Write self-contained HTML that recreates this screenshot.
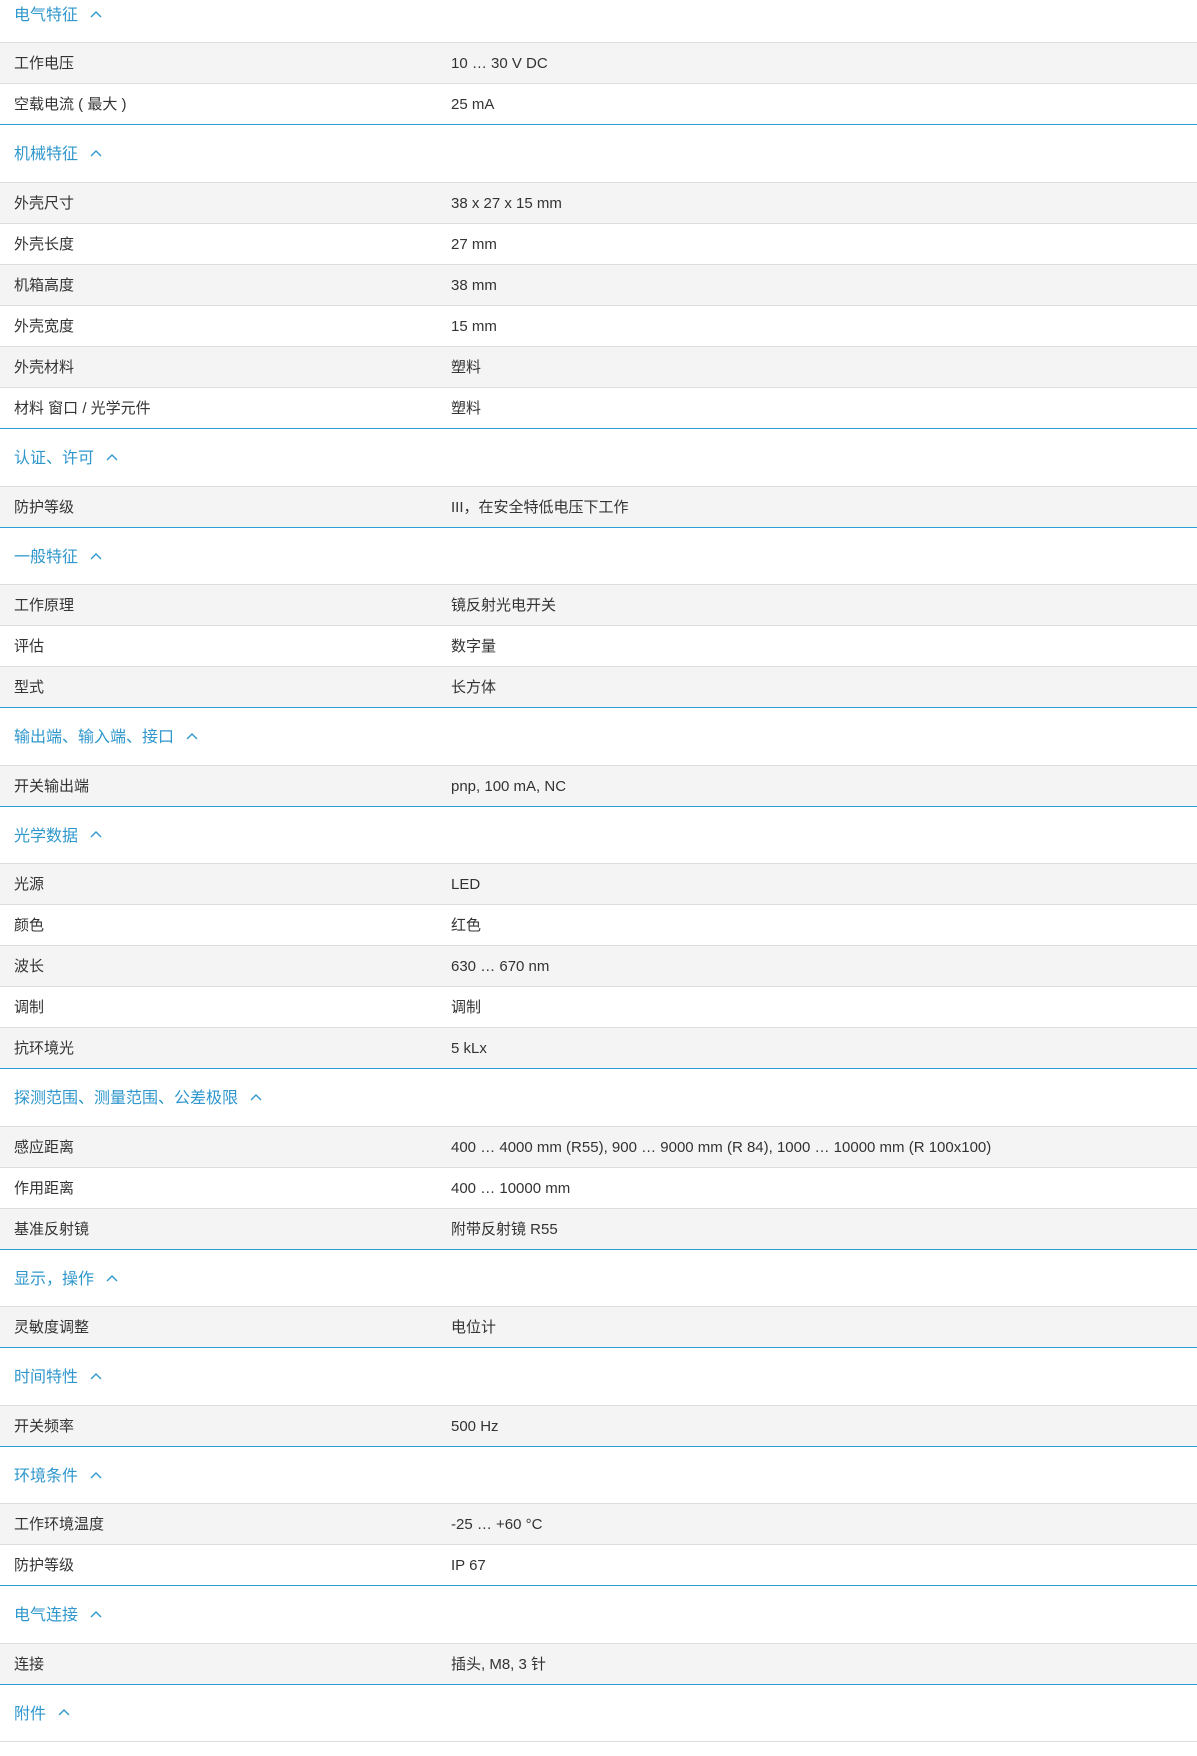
<!DOCTYPE html>
<html><head><meta charset="utf-8"><style>
body{margin:0;background:#fff;font-family:"Liberation Sans","Noto Sans CJK SC",sans-serif;overflow:hidden}
.wrap{position:relative;top:-14px;width:1197px}
.h{height:56.3px;border-bottom:1px solid #ddd;color:#2f97cc;font-size:16px;line-height:59px;padding-left:14px;box-sizing:content-box}
.h svg{margin-left:12px;vertical-align:middle;position:relative;top:-2px}
.r{height:40.1px;border-bottom:1px solid #ddd;font-size:15px;color:#333;line-height:41px;position:relative;background:#fff}
.r:nth-child(even){background:#f4f4f4}
.r span{position:absolute;left:14px}
.r b{font-weight:normal;position:absolute;left:451px}
.s{border-bottom:1px solid #2a9fd6}
.s .r:last-child{border-bottom:none}
</style></head><body><div class="wrap">
<div class="h">电气特征<svg width="12" height="8" viewBox="0 0 12 8"><path d="M1 7L6 2L11 7" fill="none" stroke="#2f97cc" stroke-width="1.4"/></svg></div>
<div class="s"><div></div><div class="r"><span>工作电压</span><b>10 … 30 V DC</b></div><div class="r"><span>空载电流 ( 最大 )</span><b>25 mA</b></div></div>
<div class="h">机械特征<svg width="12" height="8" viewBox="0 0 12 8"><path d="M1 7L6 2L11 7" fill="none" stroke="#2f97cc" stroke-width="1.4"/></svg></div>
<div class="s"><div></div><div class="r"><span>外壳尺寸</span><b>38 x 27 x 15 mm</b></div><div class="r"><span>外壳长度</span><b>27 mm</b></div><div class="r"><span>机箱高度</span><b>38 mm</b></div><div class="r"><span>外壳宽度</span><b>15 mm</b></div><div class="r"><span>外壳材料</span><b>塑料</b></div><div class="r"><span>材料 窗口 / 光学元件</span><b>塑料</b></div></div>
<div class="h">认证、许可<svg width="12" height="8" viewBox="0 0 12 8"><path d="M1 7L6 2L11 7" fill="none" stroke="#2f97cc" stroke-width="1.4"/></svg></div>
<div class="s"><div></div><div class="r"><span>防护等级</span><b>III，在安全特低电压下工作</b></div></div>
<div class="h">一般特征<svg width="12" height="8" viewBox="0 0 12 8"><path d="M1 7L6 2L11 7" fill="none" stroke="#2f97cc" stroke-width="1.4"/></svg></div>
<div class="s"><div></div><div class="r"><span>工作原理</span><b>镜反射光电开关</b></div><div class="r"><span>评估</span><b>数字量</b></div><div class="r"><span>型式</span><b>长方体</b></div></div>
<div class="h">输出端、输入端、接口<svg width="12" height="8" viewBox="0 0 12 8"><path d="M1 7L6 2L11 7" fill="none" stroke="#2f97cc" stroke-width="1.4"/></svg></div>
<div class="s"><div></div><div class="r"><span>开关输出端</span><b>pnp, 100 mA, NC</b></div></div>
<div class="h">光学数据<svg width="12" height="8" viewBox="0 0 12 8"><path d="M1 7L6 2L11 7" fill="none" stroke="#2f97cc" stroke-width="1.4"/></svg></div>
<div class="s"><div></div><div class="r"><span>光源</span><b>LED</b></div><div class="r"><span>颜色</span><b>红色</b></div><div class="r"><span>波长</span><b>630 … 670 nm</b></div><div class="r"><span>调制</span><b>调制</b></div><div class="r"><span>抗环境光</span><b>5 kLx</b></div></div>
<div class="h">探测范围、测量范围、公差极限<svg width="12" height="8" viewBox="0 0 12 8"><path d="M1 7L6 2L11 7" fill="none" stroke="#2f97cc" stroke-width="1.4"/></svg></div>
<div class="s"><div></div><div class="r"><span>感应距离</span><b>400 … 4000 mm (R55), 900 … 9000 mm (R 84), 1000 … 10000 mm (R 100x100)</b></div><div class="r"><span>作用距离</span><b>400 … 10000 mm</b></div><div class="r"><span>基准反射镜</span><b>附带反射镜 R55</b></div></div>
<div class="h">显示，操作<svg width="12" height="8" viewBox="0 0 12 8"><path d="M1 7L6 2L11 7" fill="none" stroke="#2f97cc" stroke-width="1.4"/></svg></div>
<div class="s"><div></div><div class="r"><span>灵敏度调整</span><b>电位计</b></div></div>
<div class="h">时间特性<svg width="12" height="8" viewBox="0 0 12 8"><path d="M1 7L6 2L11 7" fill="none" stroke="#2f97cc" stroke-width="1.4"/></svg></div>
<div class="s"><div></div><div class="r"><span>开关频率</span><b>500 Hz</b></div></div>
<div class="h">环境条件<svg width="12" height="8" viewBox="0 0 12 8"><path d="M1 7L6 2L11 7" fill="none" stroke="#2f97cc" stroke-width="1.4"/></svg></div>
<div class="s"><div></div><div class="r"><span>工作环境温度</span><b>-25 … +60 °C</b></div><div class="r"><span>防护等级</span><b>IP 67</b></div></div>
<div class="h">电气连接<svg width="12" height="8" viewBox="0 0 12 8"><path d="M1 7L6 2L11 7" fill="none" stroke="#2f97cc" stroke-width="1.4"/></svg></div>
<div class="s"><div></div><div class="r"><span>连接</span><b>插头, M8, 3 针</b></div></div>
<div class="h">附件<svg width="12" height="8" viewBox="0 0 12 8"><path d="M1 7L6 2L11 7" fill="none" stroke="#2f97cc" stroke-width="1.4"/></svg></div>
</div></body></html>
